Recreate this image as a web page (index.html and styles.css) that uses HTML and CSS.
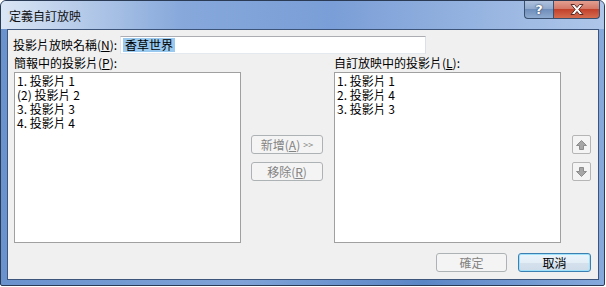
FILE: index.html
```html
<!DOCTYPE html>
<html>
	<head>
		<meta charset="utf-8" />
		<title>定義自訂放映</title>
		<link rel="stylesheet" href="styles.css">
	</head>
	<body>
		<div class="window">
			<div class="titlebar">
				<span class="title">定義自訂放映</span>
				<div class="caption">
					<div class="cap help">?</div>
					<div class="cap close">
						<svg width="14" height="11" viewBox="0 0 14 11">
							<path d="M1 0.5h3.5l2.5 3 2.5-3h3.5l-4.2 5 4.2 5h-3.5l-2.5-3-2.5 3h-3.5l4.2-5z" fill="#fff" stroke="#5a2b25" stroke-width="1"/>
						</svg>
					</div>
				</div>
			</div>
			<div class="frame">
				<div class="client">
					<div class="name-row">
						<label class="name-label">投影片放映名稱(<u>N</u>):</label>
						<div class="textbox"><span class="sel">香草世界</span></div>
					</div>
					<div class="lists">
						<div class="col">
							<div class="col-label">簡報中的投影片(<u>P</u>):</div>
							<ul class="listbox">
								<li>1. 投影片 1</li>
								<li>(2) 投影片 2</li>
								<li>3. 投影片 3</li>
								<li>4. 投影片 4</li>
							</ul>
						</div>
						<div class="mid">
							<div class="btn disabled">新增(<u>A</u>) <small>&gt;&gt;</small></div>
							<div class="btn disabled">移除(<u>R</u>)</div>
						</div>
						<div class="col">
							<div class="col-label">自訂放映中的投影片(<u>L</u>):</div>
							<ul class="listbox">
								<li>1. 投影片 1</li>
								<li>2. 投影片 4</li>
								<li>3. 投影片 3</li>
							</ul>
						</div>
						<div class="order">
							<div class="arrow-btn">
								<svg width="11" height="10" viewBox="0 0 11 10"><path d="M5.5 0.5l5 5h-3v4h-4v-4h-3z" fill="#a6a6a6" stroke="#8c8c8c" stroke-width="1" stroke-linejoin="round"/></svg>
							</div>
							<div class="arrow-btn">
								<svg width="11" height="10" viewBox="0 0 11 10"><path d="M5.5 9.5l5-5h-3v-4h-4v4h-3z" fill="#a6a6a6" stroke="#8c8c8c" stroke-width="1" stroke-linejoin="round"/></svg>
							</div>
						</div>
					</div>
					<div class="footer">
						<div class="btn disabled ok">確定</div>
						<div class="btn default">取消</div>
					</div>
				</div>
			</div>
		</div>
	</body>
</html>
```

FILE: styles.css
```css
*{
	margin: 0;
	padding: 0;
	box-sizing: border-box;
}
body{
	background: #fff;
	font-family: "Noto Sans CJK TC", "Noto Sans CJK SC", sans-serif;
	font-size: 12px;
	color: #000;
}
.window{
	width: 605px;
	height: 286px;
	border: 1px solid #2b3a55;
	border-radius: 6px 6px 2px 2px;
	background: linear-gradient(to right, #6a92cd 0%, #7fa3d8 40%, #5b86c6 70%, #86a9dc 100%);
	display: flex;
	flex-direction: column;
	overflow: hidden;
}
.titlebar{
	height: 28px;
	display: flex;
	align-items: flex-start;
	padding-left: 8px;
	padding-right: 4px;
	background: linear-gradient(to right, #dbe6f5 0%, #b9cdea 12%, #86a8db 30%, #7a9ed7 55%, #95b3e0 78%, #aec6e9 100%);
}
.title{
	line-height: 14px;
	margin-top: 8px;
	color: #111;
}
.caption{
	margin-left: auto;
	display: flex;
	margin-top: -1px;
}
.cap{
	height: 19px;
	display: flex;
	align-items: center;
	justify-content: center;
	border: 1px solid #39506f;
	border-top: none;
}
.help{
	width: 29px;
	border-radius: 0 0 0 4px;
	border-right: none;
	background: linear-gradient(#b3c6e0, #8fa8cc 50%, #6e8db9 51%, #8eaad0);
	color: #fff;
	font-family: "DejaVu Sans", sans-serif;
	font-weight: bold;
	font-size: 13px;
	text-shadow: 0 0 2px #2d4163, 0 0 1px #2d4163;
}
.close{
	width: 47px;
	border-radius: 0 0 4px 0;
	background: linear-gradient(#e4a495, #d47766 50%, #c2402a 51%, #d46c50);
}
.frame{
	flex: 1;
	padding: 0 5px 5px 6px;
	display: flex;
}
.client{
	flex: 1;
	background: #f0f0f0;
	border: 1px solid #3d557a;
	display: flex;
	flex-direction: column;
}
.name-row{
	display: flex;
	align-items: center;
	margin-top: 6px;
	padding-left: 5px;
}
.name-label{
	width: 107px;
	line-height: 14px;
}
.textbox{
	width: 306px;
	height: 18px;
	background: #fff;
	border: 1px solid #abadb3;
	border-color: #abadb3 #dbdfe6 #e3e9ef #e2e3ea;
	padding: 1px 2px;
	line-height: 14px;
}
.sel{
	display: inline-block;
	background: #99c9ef;
	padding: 0 2px;
	line-height: 14px;
}
.lists{
	display: flex;
	margin-top: 2px;
	padding-left: 6px;
}
.col{
	width: 227px;
	display: flex;
	flex-direction: column;
}
.col-label{
	height: 16px;
	line-height: 14px;
}
.listbox{
	list-style: none;
	height: 171px;
	background: #fff;
	border: 1px solid #a0a0a0;
	padding: 1px 2px;
}
.listbox li{
	height: 14px;
	line-height: 14px;
}
.mid{
	width: 93px;
	padding-left: 10px;
	padding-top: 79px;
	display: flex;
	flex-direction: column;
	gap: 8px;
}
.btn{
	width: 72px;
	height: 19px;
	display: flex;
	align-items: center;
	justify-content: center;
	border: 1px solid #707070;
	border-radius: 3px;
	line-height: 14px;
}
.btn small{
	font-size: 9px;
	margin-left: 3px;
}
.disabled{
	color: #838383;
	border-color: #adb2b5;
	background: #f4f4f4;
}
.order{
	padding-left: 11px;
	padding-top: 79px;
	display: flex;
	flex-direction: column;
	gap: 8px;
}
.arrow-btn{
	width: 19px;
	height: 19px;
	border: 1px solid #b5b5b5;
	border-radius: 2px;
	background: #f4f4f4;
	display: flex;
	align-items: center;
	justify-content: center;
}
.footer{
	display: flex;
	justify-content: flex-end;
	gap: 11px;
	margin-top: 10px;
	padding-right: 7px;
}
.ok{
	width: 71px;
}
.default{
	width: 73px;
	border-color: #3c7fb1;
	box-shadow: inset 0 0 0 1px #9fe0fb;
	background: linear-gradient(#eaf4fb, #e3edf6 50%, #d5e2ee 51%, #cedbe8);
}
```
